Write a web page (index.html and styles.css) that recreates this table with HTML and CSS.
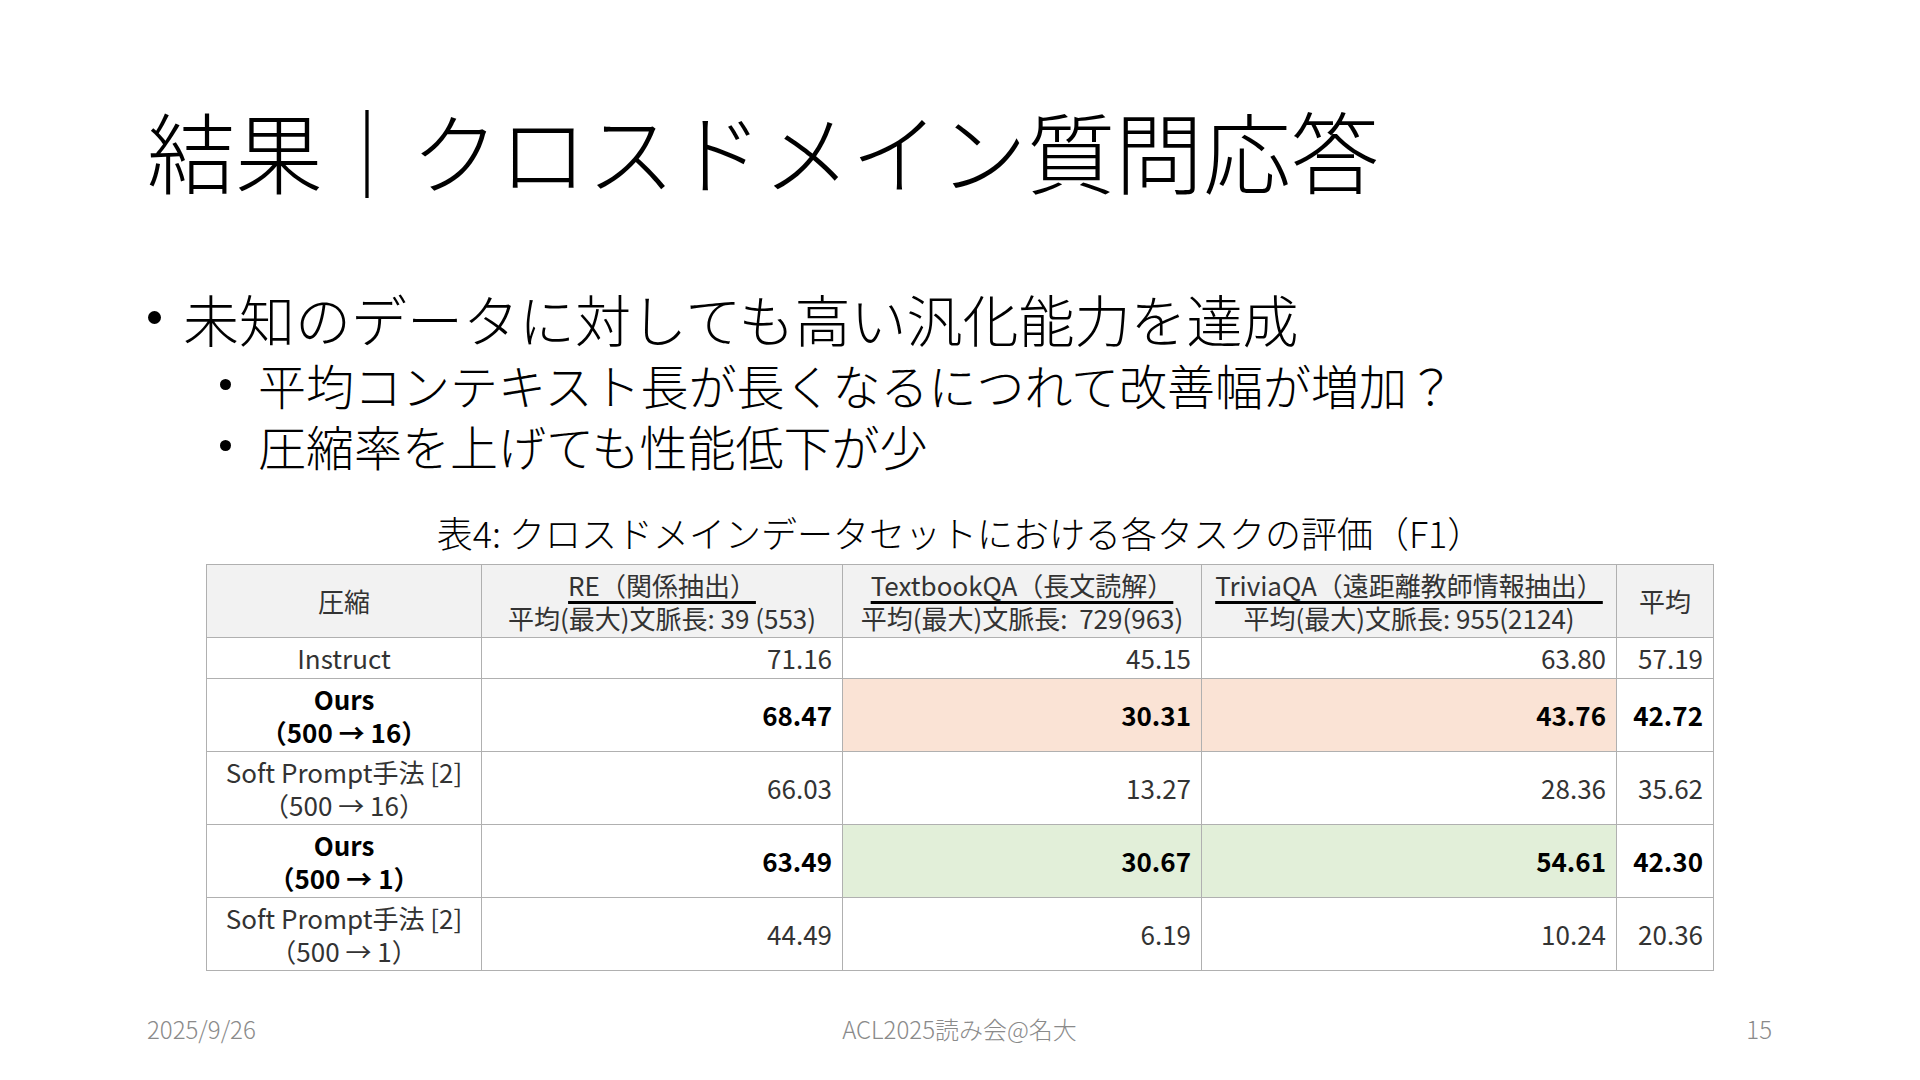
FILE: index.html
```html
<!DOCTYPE html>
<html lang="ja">
<head>
<meta charset="utf-8">
<title>結果｜クロスドメイン質問応答</title>
<link rel="stylesheet" href="styles.css">
</head>
<body>
<div class="slide">
  <h1 class="title">結果｜クロスドメイン質問応答</h1>
  <ul class="bullets">
    <li class="l1"><span class="dot"></span><span>未知のデータに対しても高い汎化能力を達成</span></li>
    <li class="l2"><span class="dot"></span><span>平均コンテキスト長が長くなるにつれて改善幅が増加？</span></li>
    <li class="l2"><span class="dot"></span><span>圧縮率を上げても性能低下が少</span></li>
  </ul>
  <div class="figure">
    <div class="caption">表4: クロスドメインデータセットにおける各タスクの評価（F1）</div>
    <table class="results">
      <colgroup>
        <col class="c-label"><col class="c-re"><col class="c-tb"><col class="c-tq"><col class="c-avg">
      </colgroup>
      <thead>
        <tr class="head">
          <th>圧縮</th>
          <th><span class="ln u">RE（関係抽出）</span><span class="ln">平均(最大)文脈長: 39 (553)</span></th>
          <th><span class="ln u">TextbookQA（長文読解）</span><span class="ln">平均(最大)文脈長:&nbsp; 729(963)</span></th>
          <th><span class="ln u">TriviaQA（遠距離教師情報抽出）</span><span class="ln">平均(最大)文脈長: 955(2124)</span></th>
          <th>平均</th>
        </tr>
      </thead>
      <tbody>
        <tr class="short">
          <td class="label">Instruct</td>
          <td class="num">71.16</td><td class="num">45.15</td><td class="num">63.80</td><td class="num">57.19</td>
        </tr>
        <tr class="bold">
          <td class="label"><span class="ln">Ours</span><span class="ln">（500 → 16）</span></td>
          <td class="num">68.47</td><td class="num hl-orange">30.31</td><td class="num hl-orange">43.76</td><td class="num">42.72</td>
        </tr>
        <tr>
          <td class="label"><span class="ln">Soft Prompt手法 [2]</span><span class="ln">（500 → 16）</span></td>
          <td class="num">66.03</td><td class="num">13.27</td><td class="num">28.36</td><td class="num">35.62</td>
        </tr>
        <tr class="bold">
          <td class="label"><span class="ln">Ours</span><span class="ln">（500 → 1）</span></td>
          <td class="num">63.49</td><td class="num hl-green">30.67</td><td class="num hl-green">54.61</td><td class="num">42.30</td>
        </tr>
        <tr>
          <td class="label"><span class="ln">Soft Prompt手法 [2]</span><span class="ln">（500 → 1）</span></td>
          <td class="num">44.49</td><td class="num">6.19</td><td class="num">10.24</td><td class="num">20.36</td>
        </tr>
      </tbody>
    </table>
  </div>
  <footer class="footer">
    <span class="f-left">2025/9/26</span>
    <span class="f-center">ACL2025読み会@名大</span>
    <span class="f-right">15</span>
  </footer>
</div>
</body>
</html>
```
FILE: styles.css
```css
* { box-sizing: border-box; }
html, body { margin: 0; padding: 0; background: #ffffff; }
body { font-family: "Noto Sans CJK JP", "Noto Sans", sans-serif; color: #000; }

.slide {
  width: 1920px;
  height: 1080px;
  padding: 96px 0 0 147px;
  overflow: hidden;
  display: flex;
  flex-direction: column;
}

.title {
  margin: 0;
  font-size: 88px;
  font-weight: 300;
  line-height: 1.2;
  color: #000;
}

.bullets {
  list-style: none;
  margin: 82px 0 0 0;
  padding: 0;
  font-weight: 300;
}
.bullets li { display: flex; align-items: center; }
.l1 { font-size: 56px; line-height: 67px; padding-left: 1px; }
.l1 .dot { width: 13px; height: 13px; margin-right: 22px; }
.l2 { font-size: 48px; line-height: 61px; padding-left: 73px; }
.l1 + .l2 { margin-top: 3px; }
.l2 .dot { width: 11px; height: 11px; margin-right: 27px; }
.dot { display: inline-block; border-radius: 50%; background: #000; flex: none; }

.figure {
  margin-top: 36px;
  width: 1567px;
  padding-left: 59px;
  display: flex;
  flex-direction: column;
}
.caption {
  font-size: 36px;
  line-height: 40px;
  font-weight: 300;
  text-align: center;
  color: #000;
}

.results {
  margin-top: 12px;
  border-collapse: collapse;
  table-layout: fixed;
  width: 1507px;
  font-size: 26px;
  line-height: 33px;
  color: #333;
  border: 1.5px solid #b0b0b0;
}
.c-label { width: 275px; }
.c-re { width: 361px; }
.c-tb { width: 359px; }
.c-tq { width: 415px; }
.c-avg { width: 97px; }

.results th, .results td {
  border: 1.5px solid #b0b0b0;
  padding: 0 10px;
  vertical-align: middle;
}
.results th {
  font-weight: 400;
  background: #f2f2f2;
  text-align: center;
  white-space: nowrap;
}
.head { height: 73px; }
.results tbody tr { height: 73px; }
.results tbody tr.short { height: 41px; }

.ln {
  display: block;
  height: 33px;
  line-height: 33px;
}
.ln.u { width: max-content; margin: 0 auto; }

.u {
  text-decoration: underline;
  text-decoration-color: #000;
  text-decoration-thickness: 3px;
  text-underline-offset: 5px;
}

.label { text-align: center; white-space: nowrap; }
.num { text-align: right; }
.bold td { font-weight: 700; color: #000; }
.hl-orange { background: #fae3d5; }
.hl-green { background: #e2efd9; }

.footer {
  margin-top: auto;
  margin-bottom: 37px;
  width: 1625px;
  display: grid;
  grid-template-columns: 1fr auto 1fr;
  font-size: 24px;
  line-height: 29px;
  font-weight: 300;
  color: #8a8a8a;
}
.f-left { text-align: left; }
.f-center { text-align: center; }
.f-right { text-align: right; }
```
